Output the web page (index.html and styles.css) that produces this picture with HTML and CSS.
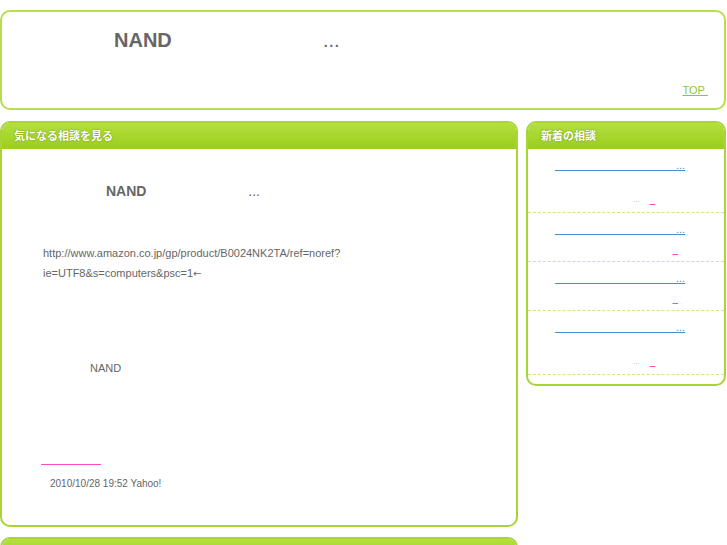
FILE: index.html
```html
<!DOCTYPE html>
<html lang="ja">
<head>
    <meta charset="UTF-8">
    <meta name="viewport" content="width=device-width, initial-scale=1.0">
    <title>NAND</title>
    <link rel="stylesheet" href="styles.css">
</head>
<body>
    <header class="header">
        <h1 class="site-title">NAND&#x3000;&#x3000;&#x3000;&#x3000;&#x3000;&#x3000;&#x3000; &nbsp;<span class="title-dots">...</span></h1>
        <div class="top-link"><a href="#">TOP&nbsp;</a></div>
    </header>

    <div class="columns">
        <main>
            <section class="box">
                <h2 class="box-head">気になる相談を見る</h2>
                <div class="consult">
                    <h3 class="consult-title">NAND&#x3000;&#x3000;&#x3000;&#x3000;&#x3000;&#x3000;&#x3000; <span class="title-dots">...</span></h3>
                    <p class="consult-url">http://www.amazon.co.jp/gp/product/B0024NK2TA/ref=noref?<br>ie=UTF8&amp;s=computers&amp;psc=1<span class="arrow">&larr;</span></p>
                    <p class="consult-text">NAND</p>
                    <p class="answer-link"><a href="#">&#x3000;&#x3000;&#x3000;&#x3000;&#x3000;</a></p>
                    <p class="posted">2010/10/28 19:52 Yahoo!</p>
                </div>
            </section>

            <section class="box">
                <div class="box-head"></div>
                <div class="consult"></div>
            </section>
        </main>

        <aside>
            <section class="box box-side">
                <h2 class="box-head">新着の相談</h2>
                <ul class="news">
                    <li class="news-item">
                        <a class="news-link" href="#">&#x3000;&#x3000;&#x3000;&#x3000;&#x3000;&#x3000;&#x3000;&#x3000;&#x3000;&#x3000;&#x3000;...</a>
                        <div class="news-desc">&#x3000;</div>
                        <div class="news-meta"><span class="dots">...</span>&#x3000;<a href="#">&nbsp;&nbsp;</a>&#x3000;&#x3000;&nbsp;</div>
                    </li>
                    <li class="news-item">
                        <a class="news-link" href="#">&#x3000;&#x3000;&#x3000;&#x3000;&#x3000;&#x3000;&#x3000;&#x3000;&#x3000;&#x3000;&#x3000;...</a>
                        <div class="news-meta"><a href="#">&nbsp;&nbsp;</a></div>
                    </li>
                    <li class="news-item">
                        <a class="news-link" href="#">&#x3000;&#x3000;&#x3000;&#x3000;&#x3000;&#x3000;&#x3000;&#x3000;&#x3000;&#x3000;&#x3000;...</a>
                        <div class="news-meta"><a href="#">&nbsp;&nbsp;</a></div>
                    </li>
                    <li class="news-item">
                        <a class="news-link" href="#">&#x3000;&#x3000;&#x3000;&#x3000;&#x3000;&#x3000;&#x3000;&#x3000;&#x3000;&#x3000;&#x3000;...</a>
                        <div class="news-desc">&#x3000;</div>
                        <div class="news-meta"><span class="dots">...</span>&#x3000;<a href="#">&nbsp;&nbsp;</a>&#x3000;&#x3000;&nbsp;</div>
                    </li>
                </ul>
            </section>
        </aside>
    </div>
</body>
</html>
```

FILE: styles.css
```css
body {
    margin: 0;
    font-family: "Liberation Sans", Arial, "Noto Sans CJK JP", sans-serif;
    color: #666;
    background-color: #fff;
}
.header {
    margin: 10px 1px 11px 0;
    border: 2px solid #b8dd4e;
    border-radius: 10px;
    padding: 16px 16px 11px 0;
}
.site-title {
    margin: 0;
    padding-left: 112px;
    font-size: 20px;
    line-height: 24px;
    font-weight: bold;
    color: #666;
}
.top-link {
    margin-top: 31px;
    text-align: right;
    font-size: 11px;
    line-height: 14px;
}
.top-link a {
    color: #8cc63f;
}
.columns {
    display: grid;
    grid-template-columns: 518px 200px;
    column-gap: 8px;
    align-items: start;
}
.box {
    border: 2px solid #a8d535;
    border-radius: 10px;
    overflow: hidden;
    background-color: #fff;
    margin-bottom: 10px;
}
.box-head {
    margin: 0;
    height: 26px;
    padding-left: 12px;
    background: linear-gradient(#b3df40, #9ccd1c);
    color: #fff;
    font-size: 11px;
    line-height: 27px;
    font-weight: bold;
    text-shadow: 0 0 2px #7ea41a, 0 0 1px #7ea41a;
}
.box-side .box-head {
    padding-left: 13px;
}
.consult {
    padding: 33px 0;
}
.consult p {
    margin: 0;
}
.consult-title {
    margin: 0;
    padding-left: 104px;
    font-size: 14px;
    line-height: 18px;
    font-weight: bold;
}
.title-dots {
    font-weight: normal;
}
.consult .consult-url {
    margin-top: 43px;
    padding-left: 41px;
    font-size: 11px;
    line-height: 20px;
}
.arrow {
    font-family: "DejaVu Sans", sans-serif;
    font-size: 10px;
    line-height: 1;
}
.consult .consult-text {
    margin-top: 75px;
    padding-left: 88px;
    font-size: 11px;
    line-height: 20px;
}
.consult .answer-link {
    margin-top: 72px;
    padding-left: 39px;
    font-size: 12px;
    line-height: 16px;
}
.answer-link a,
.news-meta a {
    color: #ff4cc4;
    text-decoration: underline 1px #ff4cc4;
    text-underline-offset: 2px;
}
.consult .posted {
    margin-top: 10px;
    padding-left: 48px;
    font-size: 10px;
    line-height: 16px;
}
.news {
    list-style: none;
    margin: 0;
    padding: 0 0 9px;
}
.news-item {
    padding: 10px 0 6px;
    border-bottom: 1px dashed #cfe58c;
    font-size: 11px;
    line-height: 13px;
}
.news-link {
    display: block;
    margin-left: 27px;
    color: #3f8fdc;
    font-size: 11px;
}
.news-desc {
    margin-top: 7px;
}
.news-meta {
    margin-top: 6px;
    padding-right: 46px;
    text-align: right;
    font-size: 10px;
}
.news-desc + .news-meta {
    margin-top: 0;
}
.dots {
    color: #aaa;
    font-size: 8px;
}
```
